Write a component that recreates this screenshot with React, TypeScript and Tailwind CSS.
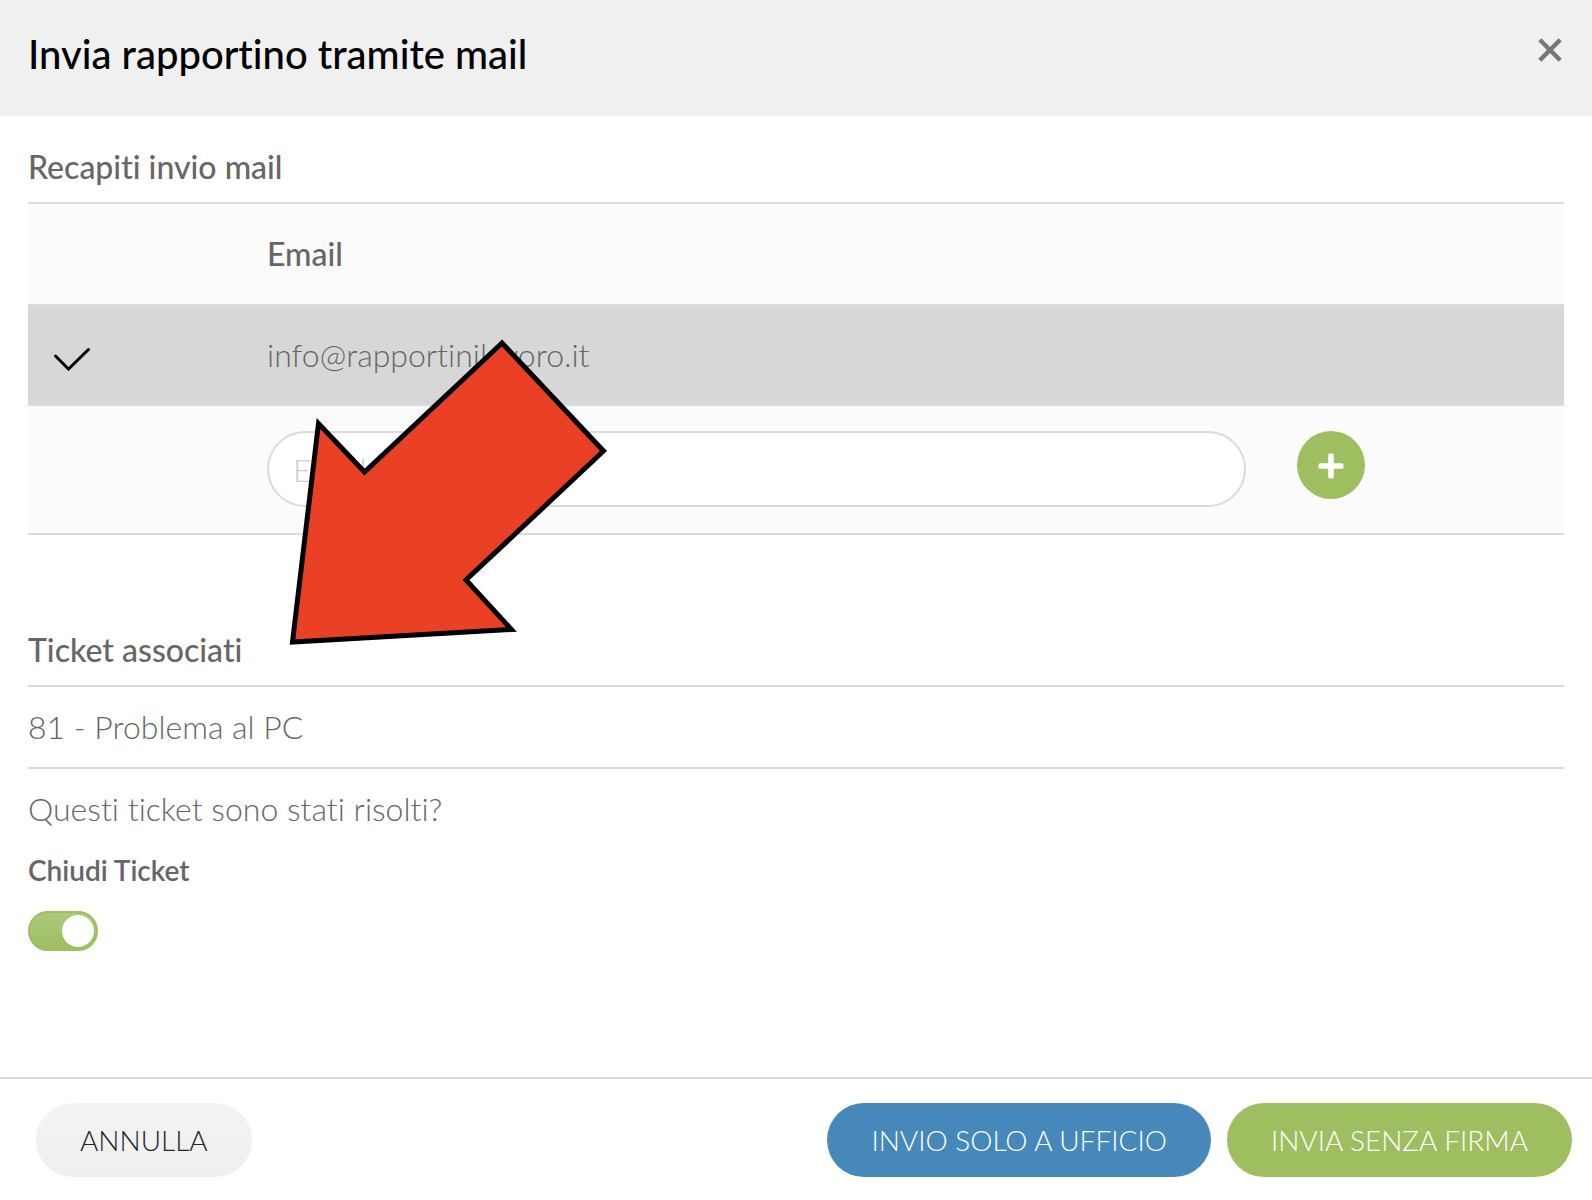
import React, { useState } from "react";

interface SectionTitleProps {
  children: React.ReactNode;
}

const SectionTitle: React.FC<SectionTitleProps> = ({ children }) => (
  <h2 className="border-b-2 border-[#dbdbdb] pb-3.5 text-[32px] leading-[42px] font-medium">
    {children}
  </h2>
);

const CheckIcon: React.FC = () => (
  <svg
    className="mt-2 h-6 w-[38px]"
    viewBox="0 0 38 24"
    fill="none"
    stroke="#000"
    strokeWidth="3"
    strokeLinecap="round"
  >
    <path d="M2.5 9 L15.5 22 L35.5 2.5" />
  </svg>
);

const Arrow: React.FC = () => (
  <svg
    className="pointer-events-none absolute top-[330px] left-[280px]"
    width="340"
    height="330"
    viewBox="280 330 340 330"
    fill="#ea4126"
    stroke="#000"
    strokeWidth="5"
  >
    <path d="M502 343 L603.5 451 L466 580 L511.5 629.5 L292.5 642 L318.5 423.5 L364.5 472 Z" />
  </svg>
);

const App: React.FC = () => {
  const [email, setEmail] = useState("");
  const [closeTicket, setCloseTicket] = useState(true);

  return (
    <div className="relative flex min-h-screen flex-col bg-white font-[Lato,sans-serif] text-[32px] font-light text-[#666] [font-variant-ligatures:no-common-ligatures]">
      <header className="flex items-start justify-between bg-[#f0f0f0] py-[30px] pr-[30px] pl-7 text-black">
        <h1 className="text-[40px] leading-[48px] font-medium">
          Invia rapportino tramite mail
        </h1>
        <button type="button" aria-label="Chiudi" className="mt-2 mb-6 h-6">
          <svg
            width="24"
            height="24"
            viewBox="0 0 24 24"
            stroke="#777"
            strokeWidth="4.4"
          >
            <path d="M1.8 1.8 L22.2 22.2 M22.2 1.8 L1.8 22.2" />
          </svg>
        </button>
      </header>

      <main className="flex-1 px-7 pt-[30px]">
        <SectionTitle>Recapiti invio mail</SectionTitle>
        <table className="w-full table-fixed border-collapse text-left leading-[50px]">
          <thead>
            <tr className="h-[101px] border-b-2 border-[#dbdbdb] bg-[#fbfbfb]">
              <th className="w-[14%]"></th>
              <th className="w-[67%] px-6 font-medium">Email</th>
              <th></th>
            </tr>
          </thead>
          <tbody>
            <tr className="h-[100px] border-b-2 border-[#dbdbdb] bg-[#d7d7d7]">
              <td className="px-[25px]">
                <CheckIcon />
              </td>
              <td className="px-6">info@rapportinilavoro.it</td>
              <td></td>
            </tr>
            <tr className="h-[129px] border-b-2 border-[#dbdbdb] bg-[#fbfbfb]">
              <td></td>
              <td className="py-[25px] pr-[26px] pl-6 align-top">
                <input
                  type="email"
                  aria-label="Email"
                  placeholder="Email"
                  value={email}
                  onChange={(e) => setEmail(e.target.value)}
                  className="block h-[76px] w-full rounded-full border-2 border-[#dbdbdb] bg-white px-6 placeholder:text-[#ccc]"
                />
              </td>
              <td className="px-[25px] py-[25px] align-top">
                <button
                  type="button"
                  aria-label="Aggiungi"
                  className="flex size-[68px] items-center justify-center rounded-full bg-[#9fbe60]"
                >
                  <svg
                    className="mt-0.5"
                    width="26"
                    height="26"
                    viewBox="0 0 26 26"
                    fill="#fff"
                  >
                    <rect x="0.5" y="10.2" width="25" height="5.6" rx="1.6" />
                    <rect x="10.2" y="0.5" width="5.6" height="25" rx="1.6" />
                  </svg>
                </button>
              </td>
            </tr>
          </tbody>
        </table>

        <section className="mt-[94px]">
          <SectionTitle>Ticket associati</SectionTitle>
          <p className="border-b-2 border-[#dbdbdb] py-4 leading-[48px]">
            81 - Problema al PC
          </p>
          <p className="pt-4 leading-[48px]">
            Questi ticket sono stati risolti?
          </p>
          <label
            htmlFor="close-ticket"
            className="mt-4 block text-[28px] leading-[42px] font-semibold"
          >
            Chiudi Ticket
          </label>
          <input
            id="close-ticket"
            type="checkbox"
            role="switch"
            checked={closeTicket}
            onChange={(e) => setCloseTicket(e.target.checked)}
            className="mt-5 mb-8 block h-10 w-[70px] appearance-none rounded-full border-2 border-[#ccc] bg-[#ccc] p-0.5 before:block before:size-8 before:rounded-full before:bg-white checked:border-[#9fbe60] checked:bg-linear-to-b checked:from-[#adc878] checked:to-[#9fbe60] checked:before:ml-auto"
          />
        </section>
      </main>

      <footer className="flex items-center justify-between border-t-2 border-[#dbdbdb] pt-6 pr-5 pb-[23px] pl-9 text-[28px] leading-[74px]">
        <button
          type="button"
          className="rounded-full bg-linear-to-b from-[#f3f3f3] to-[#efefef] px-11 text-[#212529]"
        >
          ANNULLA
        </button>
        <div className="flex gap-4 text-white">
          <button type="button" className="rounded-full bg-[#4688ba] px-11">
            INVIO SOLO A UFFICIO
          </button>
          <button type="button" className="rounded-full bg-[#9fbe60] px-11">
            INVIA SENZA FIRMA
          </button>
        </div>
      </footer>

      <Arrow />
    </div>
  );
};

export default App;
